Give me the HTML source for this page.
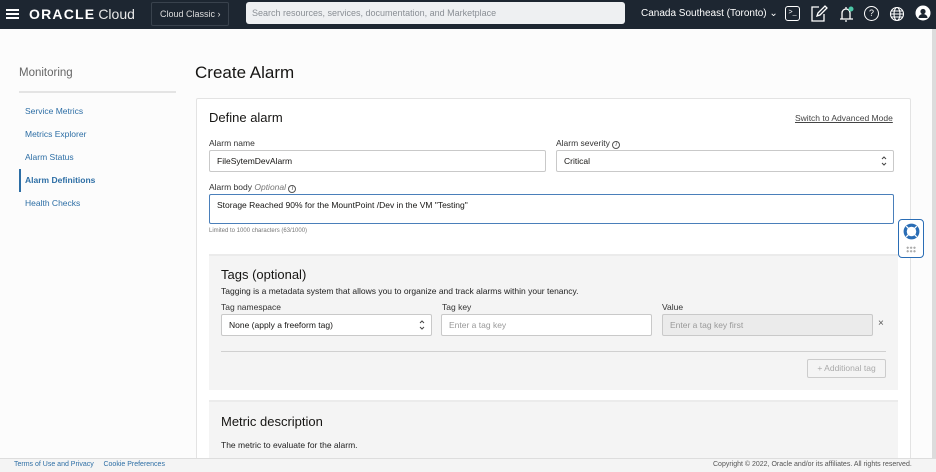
<!DOCTYPE html>
<html><head><meta charset="utf-8"><style>
*{box-sizing:border-box;margin:0;padding:0}
body{width:936px;height:472px;overflow:hidden;background:#fcfcfc;font-family:"Liberation Sans",Arial,sans-serif;color:#161513;position:relative}
.abs{position:absolute}
.hdr{left:0;top:0;width:936px;height:29px;background:#1d2631}
.lbl{font-size:8.5px;color:#333}
.inp{position:absolute;background:#fff;border:1px solid #c9c9c9;border-radius:2px;font-size:8.5px;padding-left:7px;display:flex;align-items:center}
.nav a{position:absolute;left:25px;font-size:8.5px;color:#2d6ea5;text-decoration:none}
.sp{position:absolute;right:6px;top:4px;width:6px;height:12px}
</style></head><body>
<div class="abs hdr">
 <div class="abs" style="left:6px;top:9px;width:13px;height:2px;background:#fff;box-shadow:0 4px 0 #fff,0 8px 0 #fff"></div>
 <div class="abs" style="left:29px;top:6px;color:#fff;font-size:14px;font-weight:bold;letter-spacing:1.2px">ORACLE<span style="font-weight:normal;margin-left:3px;letter-spacing:0;color:#e8e8e8">Cloud</span></div>
 <div class="abs" style="left:151px;top:2px;width:78px;height:24px;border:1px solid #39424d;border-radius:2px;color:#ddd;font-size:9px;line-height:22px;padding-left:8px">Cloud Classic ›</div>
 <div class="abs" style="left:246px;top:2px;width:379px;height:22px;background:#eef0f2;border-radius:3px;color:#8a8f95;font-size:9px;line-height:22px;padding-left:6px">Search resources, services, documentation, and Marketplace</div>
 <div class="abs" style="left:641px;top:8px;color:#fff;font-size:10px">Canada Southeast (Toronto) ⌄</div>
 <div class="abs" style="left:785px;top:6px;width:15px;height:15px;border:1.3px solid #fff;border-radius:3px;color:#fff;font-size:7px;line-height:12px;text-align:center">&gt;_</div>
 <svg class="abs" style="left:810px;top:5px" width="18" height="18" viewBox="0 0 18 18" fill="none" stroke="#fff" stroke-width="1.3"><path d="M14 9v7H2V2h7"/><path d="M7 11l1-3 7-7 2 2-7 7z"/></svg>
 <svg class="abs" style="left:838px;top:5px" width="18" height="18" viewBox="0 0 18 18" fill="none" stroke="#fff" stroke-width="1.3"><path d="M4 14V8a4 4 0 0 1 8 0v6zM2 14h13M8 2v2M7 16h2"/><circle cx="13" cy="4" r="2.5" fill="#4cc8a8" stroke="none"/></svg>
 <div class="abs" style="left:864px;top:6px;width:15px;height:15px;border:1.2px solid #fff;border-radius:50%;color:#fff;font-size:9px;line-height:13px;text-align:center">?</div>
 <svg class="abs" style="left:889px;top:6px" width="16" height="16" viewBox="0 0 16 16" fill="none" stroke="#fff" stroke-width="1.1"><circle cx="8" cy="8" r="6.5"/><ellipse cx="8" cy="8" rx="3" ry="6.5"/><path d="M1.5 8h13M2.5 5h11M2.5 11h11"/></svg>
 <svg class="abs" style="left:915px;top:5px" width="16" height="16" viewBox="0 0 16 16"><circle cx="8" cy="8" r="7.5" fill="#fff"/><circle cx="8" cy="6.5" r="2.6" fill="#1d2631"/><path d="M3.5 13a4.5 4 0 0 1 9 0z" fill="#1d2631"/></svg>
</div>
<div class="abs" style="left:932px;top:29px;width:4px;height:430px;background:#dcdcdc"></div>
<div class="abs" style="left:19px;top:67px;font-size:11.5px;color:#666">Monitoring</div>
<div class="abs" style="left:19px;top:91px;width:157px;height:2px;background:#e4e4e4"></div>
<div class="nav">
 <a style="top:106px">Service Metrics</a>
 <a style="top:129px">Metrics Explorer</a>
 <a style="top:152px">Alarm Status</a>
 <a style="top:175px;font-weight:bold">Alarm Definitions</a>
 <a style="top:198px">Health Checks</a>
</div>
<div class="abs" style="left:19px;top:169px;width:2px;height:23px;background:#2d6ea5"></div>
<div class="abs" style="left:195px;top:63px;font-size:17px">Create Alarm</div>
<div class="abs" style="left:196px;top:98px;width:715px;height:370px;background:#fff;border:1px solid #e3e3e3;border-radius:2px"></div>
<div class="abs" style="left:209px;top:110px;font-size:13px">Define alarm</div>
<div class="abs" style="left:795px;top:113px;font-size:8.5px;color:#444;text-decoration:underline">Switch to Advanced Mode</div>
<div class="abs lbl" style="left:209px;top:138px">Alarm name</div>
<div class="inp" style="left:209px;top:150px;width:337px;height:22px">FileSytemDevAlarm</div>
<div class="abs lbl" style="left:556px;top:138px">Alarm severity <span style="display:inline-block;width:8px;height:8px;border:1px solid #555;border-radius:50%;font-size:6px;line-height:6px;text-align:center;font-style:italic">i</span></div>
<div class="inp" style="left:556px;top:150px;width:338px;height:22px">Critical<svg class="sp" viewBox="0 0 6 12" fill="none" stroke="#444" stroke-width="1"><path d="M1 4l2-2 2 2M1 8l2 2 2-2"/></svg></div>
<div class="abs lbl" style="left:209px;top:182px">Alarm body <i style="color:#777">Optional</i> <span style="display:inline-block;width:8px;height:8px;border:1px solid #555;border-radius:50%;font-size:6px;line-height:6px;text-align:center;font-style:italic">i</span></div>
<div class="inp" style="left:209px;top:194px;width:685px;height:30px;border:1.5px solid #4a7fba;align-items:flex-start;padding-top:5px">Storage Reached 90% for the MountPoint /Dev in the VM "Testing"</div>
<div class="abs" style="left:209px;top:228px;font-size:6px;color:#777">Limited to 1000 characters (63/1000)</div>
<div class="abs" style="left:898px;top:219px;width:26px;height:39px;background:#fff;border:1.3px solid #2a6db5;border-radius:4px">
 <svg class="abs" style="left:3px;top:2px" width="19" height="19" viewBox="0 0 18 18" fill="none" stroke="#2a6db5"><circle cx="9" cy="9" r="6" stroke-width="3"/><circle cx="9" cy="9" r="3.6" stroke="#fff" stroke-width="1"/><path d="M4 4l2.5 2.5M14 4l-2.5 2.5M4 14l2.5-2.5M14 14l-2.5-2.5" stroke="#fff" stroke-width="1.2"/></svg>
 <div class="abs" style="left:7px;top:26px;width:10px;height:7px;background:radial-gradient(circle,#aaa 1px,transparent 1.2px) 0 0/3.4px 3.5px"></div>
</div>
<div class="abs" style="left:209px;top:254px;width:689px;height:136px;background:#f4f4f4;border-top:2px solid #ebebeb"></div>
<div class="abs" style="left:221px;top:267px;font-size:13px">Tags (optional)</div>
<div class="abs lbl" style="left:221px;top:286px;color:#222">Tagging is a metadata system that allows you to organize and track alarms within your tenancy.</div>
<div class="abs lbl" style="left:221px;top:302px">Tag namespace</div>
<div class="inp" style="left:221px;top:314px;width:211px;height:22px">None (apply a freeform tag)<svg class="sp" viewBox="0 0 6 12" fill="none" stroke="#444" stroke-width="1"><path d="M1 4l2-2 2 2M1 8l2 2 2-2"/></svg></div>
<div class="abs lbl" style="left:442px;top:302px">Tag key</div>
<div class="inp" style="left:441px;top:314px;width:211px;height:22px;color:#999">Enter a tag key</div>
<div class="abs lbl" style="left:662px;top:302px">Value</div>
<div class="inp" style="left:662px;top:314px;width:211px;height:22px;color:#999;background:#ebebeb">Enter a tag key first</div>
<div class="abs" style="left:878px;top:318px;font-size:10px;color:#555">×</div>
<div class="abs" style="left:221px;top:351px;width:665px;height:1px;background:#d0d0d0"></div>
<div class="abs" style="left:807px;top:359px;width:79px;height:19px;border:1px solid #ccc;border-radius:2px;font-size:8.5px;color:#aaa;line-height:17px;text-align:center">+ Additional tag</div>
<div class="abs" style="left:209px;top:400px;width:689px;height:58px;background:#f4f4f4;border-top:2px solid #ebebeb"></div>
<div class="abs" style="left:221px;top:414px;font-size:13px">Metric description</div>
<div class="abs lbl" style="left:221px;top:440px;color:#222">The metric to evaluate for the alarm.</div>
<div class="abs" style="left:0;top:458px;width:936px;height:14px;background:#f4f4f4;border-top:1px solid #ddd"></div>
<div class="abs" style="left:14px;top:461px;font-size:7px;color:#2d6ea5">Terms of Use and Privacy &nbsp;&nbsp;&nbsp; Cookie Preferences</div>
<div class="abs" style="left:713px;top:461px;font-size:7px;color:#555">Copyright © 2022, Oracle and/or its affiliates. All rights reserved.</div>
</body></html>
